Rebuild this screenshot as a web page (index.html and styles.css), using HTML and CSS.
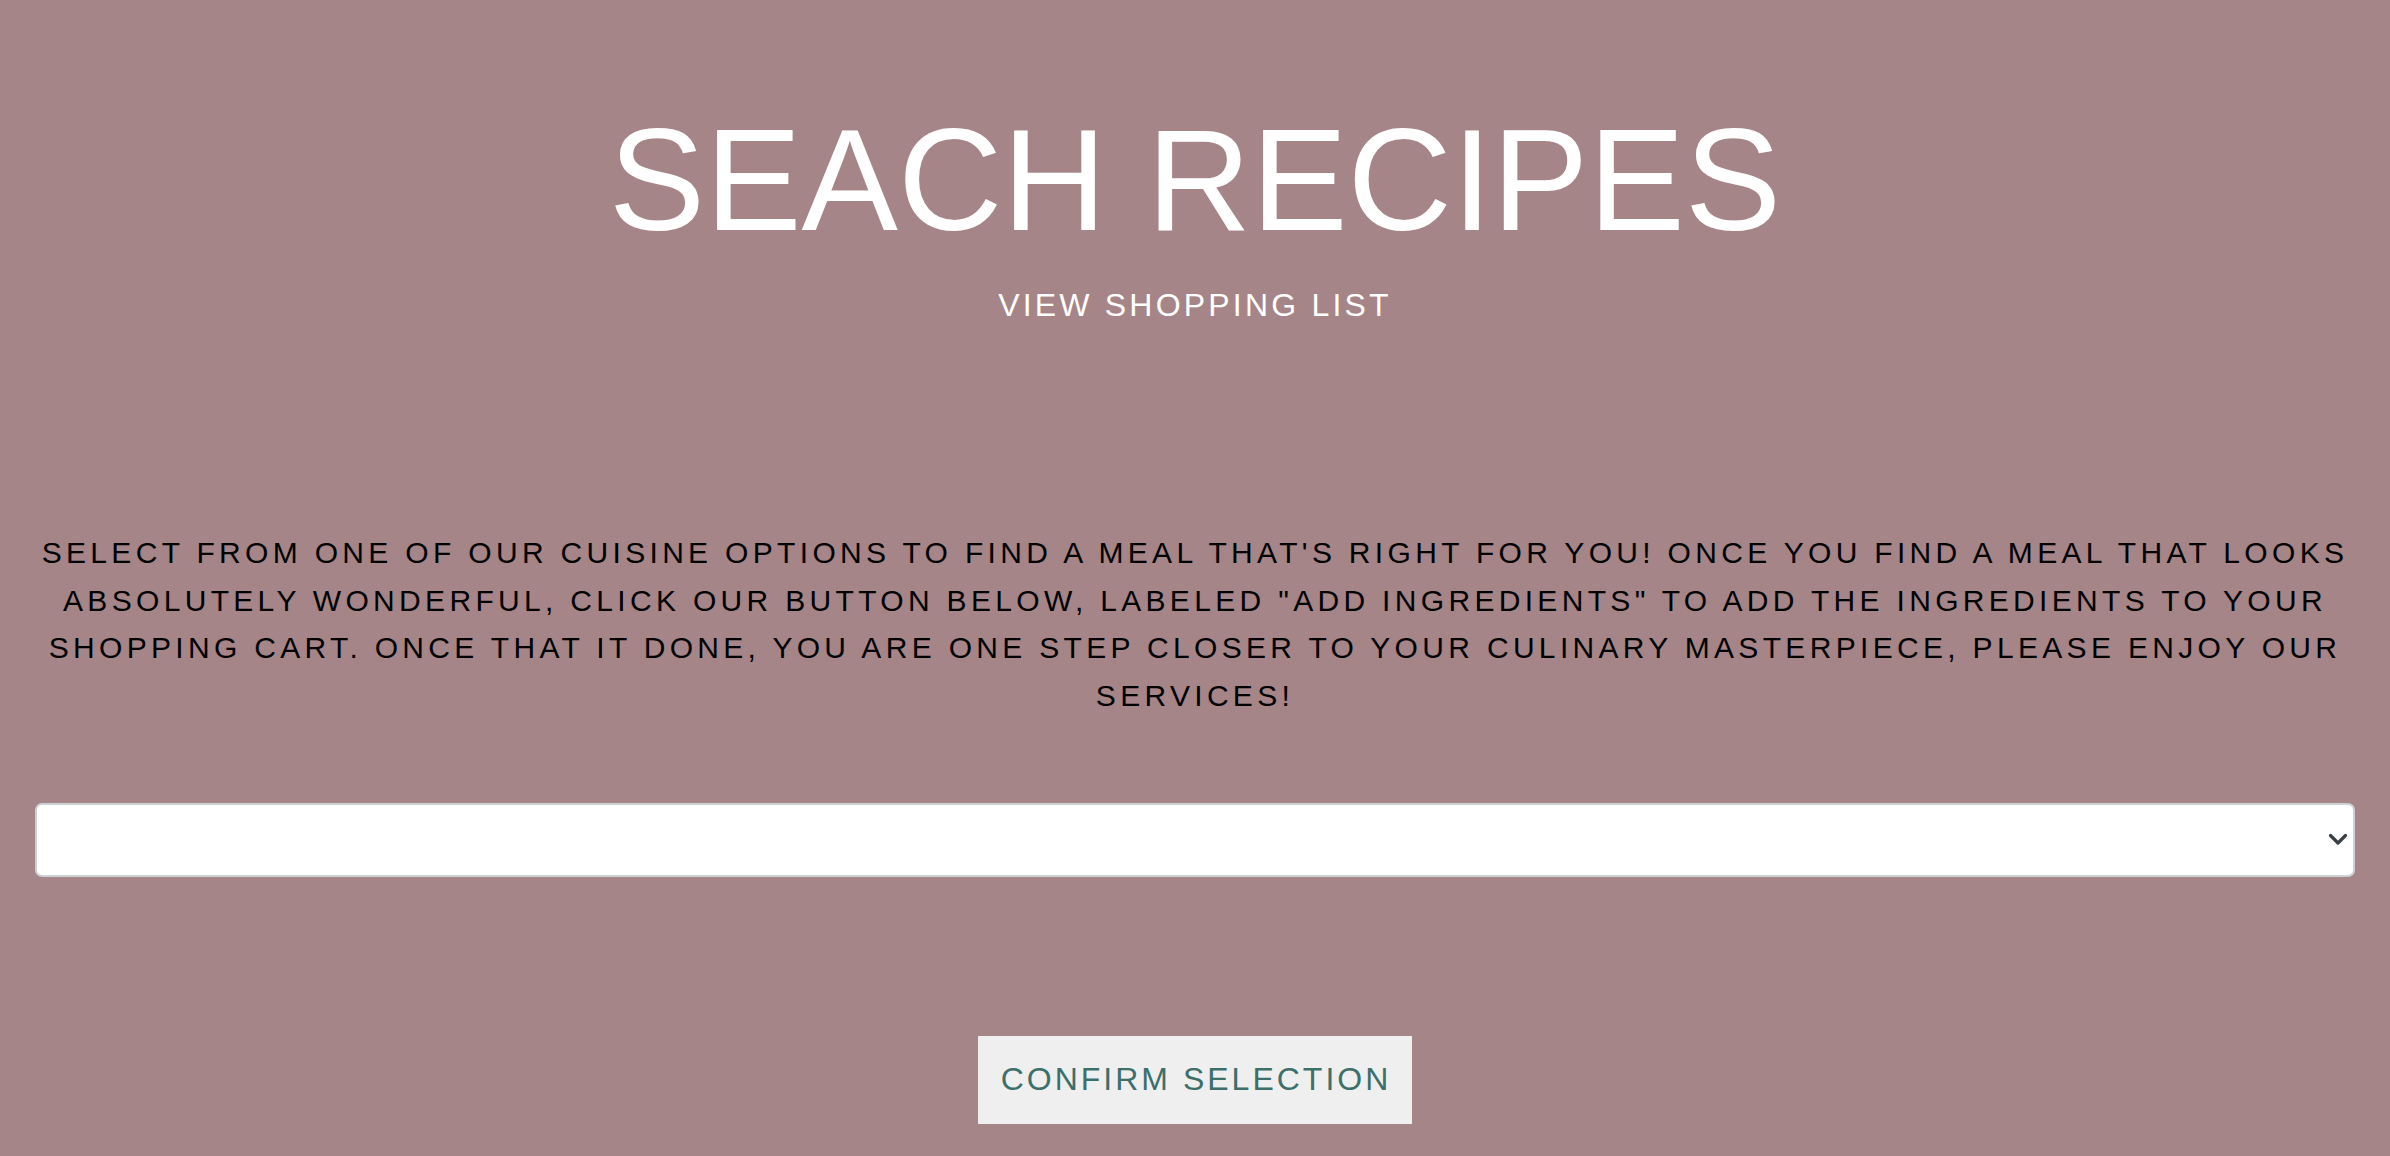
FILE: index.html
```html
<!DOCTYPE html>
<html lang="en">
<head>
<meta charset="utf-8">
<title>Seach Recipes</title>
<link rel="stylesheet" href="styles.css">
</head>
<body>
<main class="page">
  <header class="header">
    <h1 class="title">SEACH RECIPES</h1>
    <a class="list-link" href="#">VIEW SHOPPING LIST</a>
  </header>
  <p class="intro">SELECT FROM ONE OF OUR CUISINE OPTIONS TO FIND A MEAL THAT'S RIGHT FOR YOU! ONCE YOU FIND A MEAL THAT LOOKS ABSOLUTELY WONDERFUL, CLICK OUR BUTTON BELOW, LABELED "ADD INGREDIENTS" TO ADD THE INGREDIENTS TO YOUR SHOPPING CART. ONCE THAT IT DONE, YOU ARE ONE STEP CLOSER TO YOUR CULINARY MASTERPIECE, PLEASE ENJOY OUR SERVICES!</p>
  <div class="select-wrap">
    <select class="cuisine-select" aria-label="Cuisine">
      <option></option>
    </select>
    <svg class="chevron" width="20" height="14" viewBox="0 0 20 14" aria-hidden="true">
      <polyline points="2.5,2.5 10,10 17.5,2.5" fill="none" stroke="#3a3f44" stroke-width="3.2" stroke-linecap="round" stroke-linejoin="round"/>
    </svg>
  </div>
  <div class="actions">
    <button class="confirm-btn" type="button">CONFIRM SELECTION</button>
  </div>
</main>
</body>
</html>
```

FILE: styles.css
```css
html, body {
  margin: 0;
  padding: 0;
}

html {
  height: 100%;
  overflow: hidden;
}

body {
  background: #a58587;
  font-family: "Liberation Sans", Arial, sans-serif;
  height: 100%;
  overflow: hidden;
}

.page {
  padding: 0 35px;
  display: flex;
  flex-direction: column;
  align-items: stretch;
}

.header {
  padding-top: 108px;
  display: flex;
  flex-direction: column;
  align-items: center;
}

.title {
  margin: 0;
  font-size: 144.5px;
  line-height: 144px;
  font-weight: 400;
  color: #ffffff;
  letter-spacing: 0;
}

.list-link {
  margin-top: 37px;
  font-size: 32px;
  line-height: 32px;
  letter-spacing: 3.2px;
  color: #ffffff;
  text-decoration: none;
}

.intro {
  margin: 208px 0 0;
  font-size: 30px;
  line-height: 47.7px;
  letter-spacing: 4.32px;
  color: #000000;
  text-align: center;
}

.select-wrap {
  position: relative;
  margin-top: 83px;
}

.cuisine-select {
  display: block;
  width: 100%;
  height: 74px;
  box-sizing: border-box;
  margin: 0;
  padding: 0 40px 0 18px;
  background: #ffffff;
  border: 2px solid #cdd1d5;
  border-radius: 7px;
  font-family: "Liberation Sans", Arial, sans-serif;
  font-size: 24px;
  -webkit-appearance: none;
  appearance: none;
}

.chevron {
  position: absolute;
  right: 7px;
  top: 50%;
  margin-top: -7px;
  pointer-events: none;
}

.actions {
  display: flex;
  justify-content: center;
  margin-top: 159px;
}

.confirm-btn {
  margin: 0;
  padding: 27px 21px 29px 23px;
  border: none;
  border-radius: 0;
  background: #efefef;
  color: #3d6f6b;
  font-family: "Liberation Sans", Arial, sans-serif;
  font-size: 32px;
  line-height: 32px;
  letter-spacing: 3px;
}
```
